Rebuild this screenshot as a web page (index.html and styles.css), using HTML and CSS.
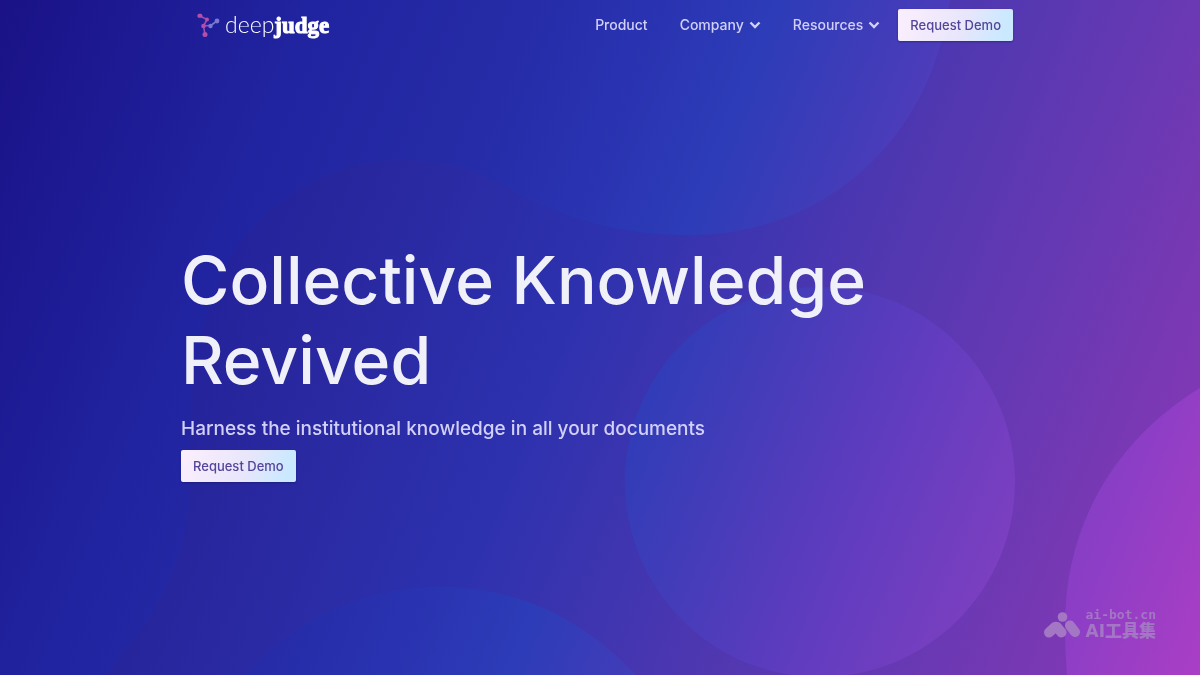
FILE: index.html
```html
<!DOCTYPE html>
<html lang="en">
<head>
<meta charset="utf-8">
<meta name="viewport" content="width=device-width, initial-scale=1">
<title>DeepJudge</title>
<link rel="stylesheet" href="styles.css">
</head>
<body class="page">
<svg class="backdrop" viewBox="0 0 1200 675" preserveAspectRatio="xMidYMid slice" aria-hidden="true">
  <defs>
    <linearGradient id="base" gradientUnits="userSpaceOnUse" x1="0" y1="0" x2="1267" y2="507">
      <stop offset="0" stop-color="#1a1286"/>
      <stop offset=".14" stop-color="#201e98"/>
      <stop offset=".28" stop-color="#28269d"/>
      <stop offset=".47" stop-color="#2d31ae"/>
      <stop offset=".58" stop-color="#4035b0"/>
      <stop offset=".69" stop-color="#5438b1"/>
      <stop offset=".79" stop-color="#6639b3"/>
      <stop offset=".89" stop-color="#7a38b4"/>
      <stop offset="1" stop-color="#8c38b8"/>
    </linearGradient>
    <linearGradient id="light" gradientUnits="userSpaceOnUse" x1="0" y1="0" x2="1267" y2="507">
      <stop offset="0" stop-color="#1a1286"/>
      <stop offset=".1" stop-color="#1d1a93"/>
      <stop offset=".22" stop-color="#2124a0"/>
      <stop offset=".34" stop-color="#252aa5"/>
      <stop offset=".44" stop-color="#2932b0"/>
      <stop offset=".53" stop-color="#2d3cb8"/>
      <stop offset=".62" stop-color="#443cb9"/>
      <stop offset=".72" stop-color="#603cbf"/>
      <stop offset=".82" stop-color="#783fc0"/>
      <stop offset=".9" stop-color="#8d3ec6"/>
      <stop offset="1" stop-color="#aa3ec5"/>
    </linearGradient>
  </defs>
  <rect width="1200" height="675" fill="url(#base)"/>
  <g fill="url(#light)">
    <path d="M0 0H950C930 145 820 235 690 235C610 235 555 214 505 186C470 167 438 160 405 160C320 160 245 212 215 290C185 368 192 430 190 500C184 570 150 625 106 675H0Z"/>
    <circle cx="820" cy="482" r="195"/>
    <path d="M245 675C300 616 365 587 440 587C515 587 580 616 636 675Z"/>
    <path d="M1200 388C1115 440 1065 525 1065 625Q1065 650 1067 675H1200Z"/>
  </g>
</svg>

<header class="header container">
  <a class="logo" href="#" aria-label="deepjudge">
    <svg class="logo-mark" viewBox="0 0 26 26" aria-hidden="true">
      <g fill="none" stroke-width="1.6">
        <path stroke="#a04cae" d="M5 4 12 7.500 8.500 14 10 22.500M8.500 14 15 13.500"/>
        <path stroke="#7a78d2" d="M15 14 22 9"/>
      </g>
      <g fill="#b44ea8"><rect x="2.500" y="1.800" width="4.800" height="4" rx="1.500"/><circle cx="12" cy="7.500" r="2"/><circle cx="8.500" cy="14" r="2.300"/><circle cx="10" cy="22.500" r="2.500"/></g>
      <g fill="#7a78d2"><circle cx="15.500" cy="14" r="2.200"/><circle cx="22" cy="9" r="2.400"/></g>
    </svg>
    <span class="logo-text"><span class="logo-deep">deep</span><span class="logo-judge">judge</span></span>
  </a>
  <nav class="nav">
    <a class="nav-link" href="#">Product</a>
    <button class="nav-link" type="button">Company
      <svg class="chevron" viewBox="0 0 12 8" aria-hidden="true"><path d="M1.500 1.500 6 6 10.500 1.500"/></svg>
    </button>
    <button class="nav-link" type="button">Resources
      <svg class="chevron" viewBox="0 0 12 8" aria-hidden="true"><path d="M1.500 1.500 6 6 10.500 1.500"/></svg>
    </button>
  </nav>
  <a class="button" href="#">Request Demo</a>
</header>

<main class="hero container">
  <h1 class="title">Collective Knowledge Revived</h1>
  <p class="subtitle">Harness the institutional knowledge in all your documents</p>
  <a class="button" href="#">Request Demo</a>
</main>

<div class="watermark">
  <svg class="watermark-mark" viewBox="0 0 36 26" aria-hidden="true">
    <circle class="watermark-head" cx="18.500" cy="5" r="4.800"/>
    <path d="M5 20.500 11 15Q12 14.500 13 15L17.500 20.500M26 13.500 31 20"/>
  </svg>
  <div class="watermark-text">
    <span class="watermark-site">ai-bot.cn</span>
    <span class="watermark-name" lang="zh">AI工具集</span>
  </div>
</div>
</body>
</html>
```

FILE: styles.css
```css
*, *::before, *::after {
  box-sizing: border-box;
}

.page {
  display: flex;
  flex-direction: column;
  min-height: 100vh;
  margin: 0;
  background: #2d31ae;
  font-family: Inter, "Liberation Sans", sans-serif;
  font-weight: 450;
}

.backdrop {
  position: fixed;
  inset: 0;
  z-index: -1;
  width: 100%;
  height: 100%;
}

.container {
  width: 100%;
  max-width: 838px;
  margin: 0 auto;
}

.header {
  display: flex;
  align-items: center;
  padding: 9px 6px 9px 14px;
}

.logo {
  display: flex;
  align-items: center;
  gap: 4px;
  color: #fff;
  text-decoration: none;
}

.logo-mark {
  width: 26px;
  height: 26px;
}

.logo-text {
  display: flex;
  align-items: baseline;
  line-height: 30px;
}

.logo-deep {
  font-family: Lato, sans-serif;
  font-size: 23px;
  font-weight: 300;
}

.logo-judge {
  font-family: "Liberation Serif", serif;
  font-size: 23px;
  font-weight: 700;
  -webkit-text-stroke: 1px #fff;
}

.nav {
  display: flex;
  gap: 32px;
  margin-left: auto;
  margin-right: 18px;
}

.nav-link {
  display: flex;
  align-items: center;
  gap: 5px;
  padding: 0;
  border: 0;
  background: none;
  color: #d2d0f6;
  font: inherit;
  font-size: 14px;
  line-height: 20px;
  text-decoration: none;
  cursor: pointer;
}

.chevron {
  width: 12px;
  height: 8px;
  fill: none;
  stroke: currentColor;
  stroke-width: 2.4;
}

.button {
  padding: 0 12px;
  border-radius: 2px;
  background: linear-gradient(110deg, #fbeffd 0%, #e9e6fb 55%, #cae9ff 90%);
  box-shadow: 0 1px 2px rgba(20, 16, 90, .4);
  color: #54449a;
  font-size: 13px;
  line-height: 32px;
  text-decoration: none;
}

.hero {
  display: flex;
  flex: 1;
  flex-direction: column;
  align-items: flex-start;
  justify-content: center;
  padding-bottom: 4px;
}

.title {
  margin: 0 0 16px;
  color: #f0f0f8;
  font-size: 66px;
  font-weight: 550;
  line-height: 80px;
}

.subtitle {
  margin: 0 0 8px;
  color: #d2d0f6;
  font-size: 19px;
  line-height: 26px;
}

.watermark {
  position: fixed;
  right: 44px;
  bottom: 34px;
  display: flex;
  align-items: center;
  gap: 6px;
  color: #a477c4;
}

.watermark-mark {
  width: 36px;
  height: 26px;
  fill: none;
  stroke: currentColor;
  stroke-width: 10;
  stroke-linecap: round;
  stroke-linejoin: round;
}

.watermark-head {
  fill: currentColor;
  stroke: none;
}

.watermark-text {
  display: flex;
  flex-direction: column;
  font-family: "DejaVu Sans", "Noto Sans CJK SC", sans-serif;
  font-weight: 700;
}

.watermark-site {
  font-family: "DejaVu Sans Mono", monospace;
  font-size: 13px;
  line-height: 12px;
}

.watermark-name {
  font-size: 17px;
  font-weight: 900;
  line-height: 20px;
}
```
